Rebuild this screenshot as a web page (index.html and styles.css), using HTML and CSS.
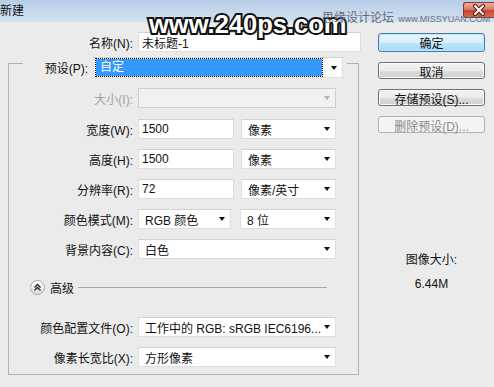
FILE: index.html
```html
<!DOCTYPE html>
<html lang="zh-CN">
<head>
    <meta charset="UTF-8">
    <title>新建</title>
    <link rel="stylesheet" href="styles.css">
</head>
<body>

    <div class="titlebar">
        <span class="title">新建</span>
        <span class="close">
            <svg width="14" height="12" viewBox="0 0 14 12">
                <path d="M3 2 L11 10 M11 2 L3 10" stroke="#5a1a10" stroke-width="4" stroke-linecap="round"/>
                <path d="M3 2 L11 10 M11 2 L3 10" stroke="#fff" stroke-width="2" stroke-linecap="round"/>
            </svg>
        </span>
    </div>

    <!-- watermarks over the title bar -->
    <div class="watermark">www.240ps.com</div>
    <div class="forum">思缘设计论坛 <span class="forum-url">www.MISSYUAN.COM</span></div>

    <div class="dialog">
        <div class="main">
            <div class="row name-row">
                <label>名称(N):</label>
                <div class="input">未标题-1</div>
            </div>

            <div class="group">
                <div class="preset-row">
                    <div class="legend">
                        <label>预设(P):</label>
                        <div class="select preset">
                            <span class="sel">自定</span>
                            <i class="arrow"></i>
                        </div>
                    </div>
                </div>

                <div class="row disabled">
                    <label>大小(I):</label>
                    <div class="select"><span></span><i class="arrow"></i></div>
                </div>

                <div class="row first-size">
                    <label>宽度(W):</label>
                    <div class="pair">
                        <div class="input">1500</div>
                        <div class="select"><span>像素</span><i class="arrow"></i></div>
                    </div>
                </div>

                <div class="row">
                    <label>高度(H):</label>
                    <div class="pair">
                        <div class="input">1500</div>
                        <div class="select"><span>像素</span><i class="arrow"></i></div>
                    </div>
                </div>

                <div class="row">
                    <label>分辨率(R):</label>
                    <div class="pair">
                        <div class="input">72</div>
                        <div class="select"><span>像素/英寸</span><i class="arrow"></i></div>
                    </div>
                </div>

                <div class="row">
                    <label>颜色模式(M):</label>
                    <div class="pair mode">
                        <div class="select"><span>RGB 颜色</span><i class="arrow"></i></div>
                        <div class="select"><span>8 位</span><i class="arrow"></i></div>
                    </div>
                </div>

                <div class="row">
                    <label>背景内容(C):</label>
                    <div class="select"><span>白色</span><i class="arrow"></i></div>
                </div>

                <div class="adv">
                    <span class="chev">
                        <svg width="9" height="9" viewBox="0 0 9 9">
                            <path d="M1.5 4.5 L4.5 1.5 L7.5 4.5 M1.5 7.5 L4.5 4.5 L7.5 7.5" fill="none" stroke="#222" stroke-width="1.3"/>
                        </svg>
                    </span>
                    <span class="adv-text">高级</span>
                    <span class="adv-line"></span>
                </div>

                <div class="row profile">
                    <label>颜色配置文件(O):</label>
                    <div class="select"><span>工作中的 RGB: sRGB IEC6196...</span><i class="arrow"></i></div>
                </div>

                <div class="row">
                    <label>像素长宽比(X):</label>
                    <div class="select"><span>方形像素</span><i class="arrow"></i></div>
                </div>
            </div>
        </div>

        <div class="side">
            <button class="btn default">确定</button>
            <button class="btn">取消</button>
            <button class="btn">存储预设(S)...</button>
            <button class="btn" disabled>删除预设(D)...</button>

            <div class="info">
                <div>图像大小:</div>
                <div class="info-size">6.44M</div>
            </div>
        </div>
    </div>

</body>
</html>
```

FILE: styles.css
```css
body {
    margin: 0;
    width: 494px;
    height: 387px;
    overflow: hidden;
    position: relative;
    background: #ebebeb;
    font-family: "Liberation Sans", "Noto Sans CJK SC", sans-serif;
    font-size: 12px;
    color: #111;
}

/* title bar */
.titlebar {
    height: 22px;
    background: linear-gradient(to bottom, #b7cde6, #d4e2f1);
    display: flex;
    justify-content: space-between;
    align-items: flex-start;
}
.title {
    line-height: 22px;
    font-size: 12px;
}
.close {
    width: 31px;
    height: 16px;
    margin-top: 2px;
    box-sizing: border-box;
    border: 1px solid #8a3a2b;
    border-right: none;
    border-radius: 3px 0 0 3px;
    background: linear-gradient(to bottom, #eab0a2, #d77a66 45%, #c6442c 55%, #d46e57);
    display: flex;
    align-items: center;
    justify-content: center;
}

.forum {
    position: absolute;
    left: 322px;
    top: 8px;
    font-size: 12px;
    color: #5f6b7c;
    white-space: nowrap;
}
.forum-url {
    font-size: 9px;
    margin-left: 1px;
    color: #66717f;
}
.watermark {
    position: absolute;
    left: 149px;
    top: 12px;
    font-family: "Liberation Sans", sans-serif;
    font-weight: bold;
    font-size: 25.5px;
    line-height: 25.5px;
    color: #fff;
    -webkit-text-stroke: 4px #111;
    paint-order: stroke fill;
}

/* dialog */
.dialog {
    display: flex;
    padding-left: 8px;
}
.main {
    width: 353px;
    padding-top: 10px;
}
.row {
    display: grid;
    grid-template-columns: 124px 198px;
    column-gap: 5px;
    align-items: center;
    height: 20px;
}
.row label {
    text-align: right;
    white-space: nowrap;
}
.name-row {
    grid-template-columns: 125px 223px;
}
.input, .select {
    height: 20px;
    box-sizing: border-box;
    background: #fff;
    border: 1px solid #dedede;
    border-top-color: #d2d2d2;
    display: flex;
    align-items: center;
    white-space: nowrap;
    overflow: hidden;
}
.input {
    padding-left: 3px;
}
.select {
    justify-content: space-between;
    padding: 0 5px 0 6px;
}
.select span {
    overflow: hidden;
}
.arrow {
    flex: none;
    width: 0;
    height: 0;
    border-left: 3.5px solid transparent;
    border-right: 3.5px solid transparent;
    border-top: 4px solid #111;
}
.pair {
    display: grid;
    grid-template-columns: 96px 95px;
    column-gap: 7px;
}
.pair.mode {
    grid-template-columns: 93px 96px;
    column-gap: 9px;
}

.group {
    margin-top: 11px;
    width: 351px;
    box-sizing: border-box;
    border: 1px solid #b2b2b2;
    display: flex;
    flex-direction: column;
    gap: 10px;
    padding-bottom: 7px;
}
.preset-row {
    margin-top: -7px;
    padding-left: 14px;
    display: flex;
}
.legend {
    background: #ebebeb;
    display: flex;
    align-items: center;
    padding-right: 4px;
}
.legend label {
    width: 65px;
    text-align: right;
    margin-right: 5px;
}
.preset {
    width: 250px;
    height: 21px;
    padding: 1px 5px 1px 2px;
}
.preset .sel {
    width: 226px;
    height: 17px;
    box-sizing: border-box;
    background: #3399ff;
    outline: 1px dotted #000;
    color: #fff;
    padding-left: 4px;
    line-height: 17px;
}
.disabled label {
    color: #a3a3a3;
}
.disabled .select {
    background: #f1f1f1;
    border-color: #cfcfcf;
}
.disabled .arrow {
    border-top-color: #b0b0b0;
}
.first-size {
    margin-top: 1px;
}

.adv {
    display: flex;
    align-items: center;
    height: 15px;
    margin-top: 11px;
    padding-left: 21px;
}
.chev {
    width: 15px;
    height: 15px;
    box-sizing: border-box;
    border-radius: 50%;
    border: 1px solid #a9a9a9;
    background: linear-gradient(to bottom, #ffffff, #dcdcdc);
    display: flex;
    align-items: center;
    justify-content: center;
}
.adv-text {
    margin-left: 5px;
}
.adv-line {
    flex: 1;
    height: 1px;
    background: #a8a8a8;
    margin: 0 31px 0 4px;
}
.profile {
    margin-top: 12px;
}

/* buttons */
.side {
    width: 107px;
    margin-left: 17px;
    padding-top: 11px;
    display: flex;
    flex-direction: column;
    gap: 10px;
}
.btn {
    height: 17px;
    padding: 0;
    font: inherit;
    color: #111;
    border: 1px solid #707070;
    border-radius: 3px;
    background: linear-gradient(to bottom, #f4f4f4, #ebebeb 50%, #dddddd 51%, #d0d0d0);
    box-shadow: inset 0 0 0 1px #fcfcfc;
}
.btn.default {
    height: 19px;
    border-color: #3c7fb1;
    background: linear-gradient(to bottom, #eaf6fd, #d9f0fc 50%, #bee6fd 51%, #a7d9f5);
    box-shadow: inset 0 0 0 1px #bfe6fb;
}
.btn:disabled {
    color: #8a8a8a;
    border-color: #adb2b5;
    background: #f4f4f4;
    box-shadow: none;
}
.info {
    margin-top: 110px;
    text-align: center;
    line-height: 14px;
}
.info-size {
    margin-top: 10px;
}
```
